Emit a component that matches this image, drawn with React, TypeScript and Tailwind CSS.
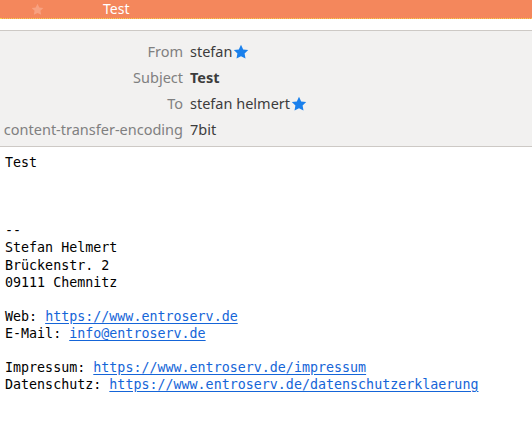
import React from 'react';

const Star = ({ className }: { className?: string }) => (
    <svg viewBox="0 0 16 16" className={className} fill="currentColor">
        <path d="M8 0.8l2.2 4.6 5 .7-3.6 3.5.9 5-4.5-2.4-4.5 2.4.9-5L.8 6.1l5-.7z" />
    </svg>
);

const rows = [
    { label: 'From', value: 'stefan', star: true },
    { label: 'Subject', value: 'Test', bold: true },
    { label: 'To', value: 'stefan helmert', star: true },
    { label: 'content-transfer-encoding', value: '7bit' },
];

const link = 'text-[#1565d8] underline underline-offset-2';

export default function App() {
    return (
        <div className="w-[532px] h-[433px] bg-white overflow-hidden">
            <div className="h-[19px] bg-[#f4875c] border-b border-dotted border-[#f7d54c] flex items-center font-['Noto_Sans',sans-serif] text-[14px] text-white">
                <Star className="w-[13px] h-[13px] ml-[31px] text-[#f9a88a] opacity-80" />
                <span className="ml-[59px] leading-none">Test</span>
            </div>
            <div className="h-[11px]" />
            <div className="bg-[#f2f1f0] border-y border-[#cdc9c5] pt-[8px] pb-[3px] font-['Noto_Sans',sans-serif] text-[14.5px]">
                {rows.map((r) => (
                    <div key={r.label} className="flex items-center h-[26px]">
                        <div className="w-[190px] text-right pr-[7px] text-[#808080] whitespace-nowrap">{r.label}</div>
                        <div className={`flex items-center text-[#3c3c3c] ${r.bold ? 'font-bold' : ''}`}>
                            {r.value}
                            {r.star && <Star className="w-[16px] h-[16px] ml-[1px] text-[#1a80ec]" />}
                        </div>
                    </div>
                ))}
            </div>
            <div className="px-[5px] pt-[7px] font-['DejaVu_Sans_Mono',monospace] text-[13.33px] leading-[17.1px] text-black whitespace-pre">
                <div>Test</div>
                <div>&nbsp;</div>
                <div>&nbsp;</div>
                <div>&nbsp;</div>
                <div>--</div>
                <div>Stefan Helmert</div>
                <div>Brückenstr. 2</div>
                <div>09111 Chemnitz</div>
                <div>&nbsp;</div>
                <div>Web: <span className={link}>https://www.entroserv.de</span></div>
                <div>E-Mail: <span className={link}>info@entroserv.de</span></div>
                <div>&nbsp;</div>
                <div>Impressum: <span className={link}>https://www.entroserv.de/impressum</span></div>
                <div>Datenschutz: <span className={link}>https://www.entroserv.de/datenschutzerklaerung</span></div>
            </div>
        </div>
    );
}
